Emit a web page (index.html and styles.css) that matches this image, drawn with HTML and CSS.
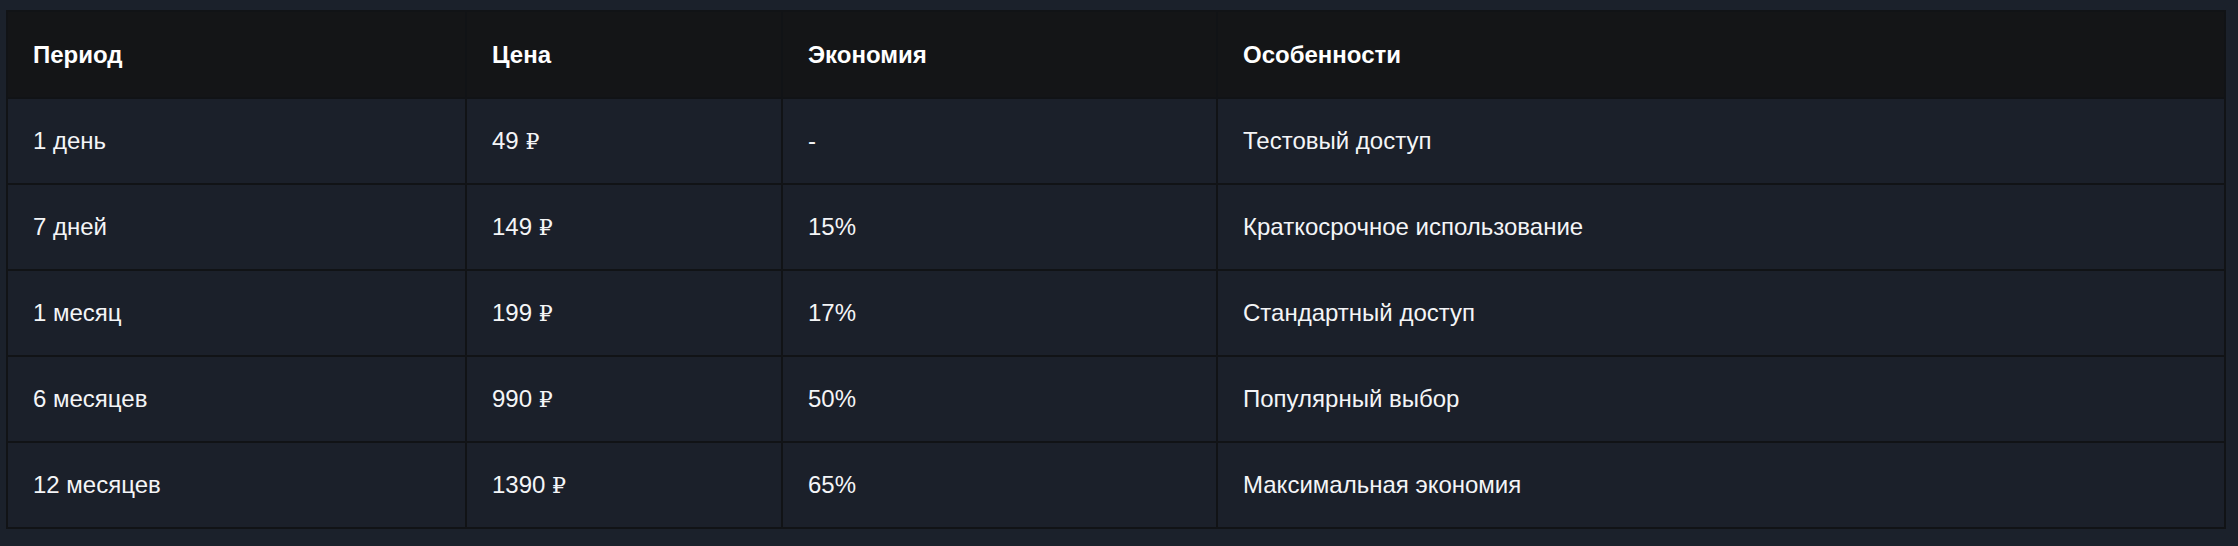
FILE: index.html
```html
<!DOCTYPE html>
<html lang="ru">
<head>
<meta charset="utf-8">
<title>Тарифы</title>
<link rel="stylesheet" href="styles.css">
</head>
<body>
<div class="wrap">
  <table class="plans">
    <colgroup>
      <col class="c1"><col class="c2"><col class="c3"><col class="c4">
    </colgroup>
    <thead>
      <tr><th>Период</th><th>Цена</th><th>Экономия</th><th>Особенности</th></tr>
    </thead>
    <tbody>
      <tr><td>1 день</td><td>49 <span class="rub">₽</span></td><td>-</td><td>Тестовый доступ</td></tr>
      <tr><td>7 дней</td><td>149 <span class="rub">₽</span></td><td>15%</td><td>Краткосрочное использование</td></tr>
      <tr><td>1 месяц</td><td>199 <span class="rub">₽</span></td><td>17%</td><td>Стандартный доступ</td></tr>
      <tr><td>6 месяцев</td><td>990 <span class="rub">₽</span></td><td>50%</td><td>Популярный выбор</td></tr>
      <tr><td>12 месяцев</td><td>1390 <span class="rub">₽</span></td><td>65%</td><td>Максимальная экономия</td></tr>
    </tbody>
  </table>
</div>
</body>
</html>
```
FILE: styles.css
```css
html, body {
  margin: 0;
  padding: 0;
  background: #1b212b;
}
body {
  font-family: "Liberation Sans", Arial, sans-serif;
  color: #f4f5f7;
}
.wrap {
  padding: 10px 12px 19px 6px;
}
.plans {
  width: 100%;
  table-layout: fixed;
  border-collapse: collapse;
  font-size: 24px;
  line-height: 26px;
}
.c1 { width: 459px; }
.c2 { width: 316px; }
.c3 { width: 435px; }
.plans th,
.plans td {
  text-align: left;
  padding: 0 25px;
  border: 2px solid #111316;
}
.plans th {
  height: 85px;
  background: #141517;
  color: #ffffff;
  font-weight: bold;
}
.plans td {
  height: 84px;
  background: #1b202a;
}
.rub {
  font-family: "Liberation Serif", "DejaVu Serif", serif;
  font-size: 22px;
  line-height: 0;
}
```
